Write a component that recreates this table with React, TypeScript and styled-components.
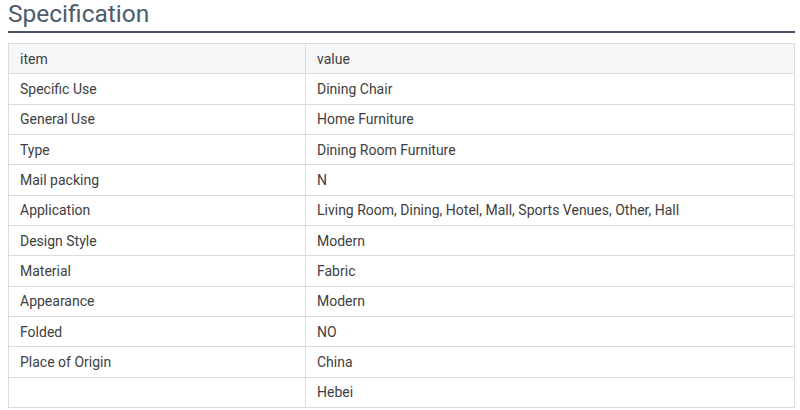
import React from 'react'
import styled, { createGlobalStyle } from 'styled-components'

const GlobalStyle = createGlobalStyle`
    html, body {
        margin: 0;
        padding: 0;
        background: #ffffff;
    }
    body {
        font-family: Roboto, "Liberation Sans", Arial, sans-serif;
    }
`

const Section = styled.section`
    padding: 0 5px 0 8px;
`

const Title = styled.h2`
    margin: 0;
    font-size: 24.5px;
    font-weight: 400;
    line-height: 27px;
    color: #4d5b6b;
    padding-bottom: 4px;
    border-bottom: 2px solid #465566;
`

const Table = styled.table`
    margin-top: 10px;
    width: 100%;
    border-collapse: collapse;
    border: 1px solid #dcdcdc;
    font-size: 14px;
    color: #404040;
`

const Row = styled.tr<{ $head?: boolean }>`
    background: ${p => (p.$head ? '#f5f7f9' : '#ffffff')};
`

const Cell = styled.td`
    height: 29.33px;
    padding: 0 11px;
    border: 1px solid #dcdcdc;
    vertical-align: middle;
    &:first-child {
        width: 274px;
    }
`

const specs: [string, string][] = [
    ['Specific Use', 'Dining Chair'],
    ['General Use', 'Home Furniture'],
    ['Type', 'Dining Room Furniture'],
    ['Mail packing', 'N'],
    ['Application', 'Living Room, Dining, Hotel, Mall, Sports Venues, Other, Hall'],
    ['Design Style', 'Modern'],
    ['Material', 'Fabric'],
    ['Appearance', 'Modern'],
    ['Folded', 'NO'],
    ['Place of Origin', 'China'],
    ['', 'Hebei'],
]

export default function App() {
    return (
        <>
            <GlobalStyle />
            <Section>
                <Title>Specification</Title>
                <Table>
                    <tbody>
                        <Row $head>
                            <Cell>item</Cell>
                            <Cell>value</Cell>
                        </Row>
                        {specs.map(([item, value], i) => (
                            <Row key={i}>
                                <Cell>{item}</Cell>
                                <Cell>{value}</Cell>
                            </Row>
                        ))}
                    </tbody>
                </Table>
            </Section>
        </>
    )
}
